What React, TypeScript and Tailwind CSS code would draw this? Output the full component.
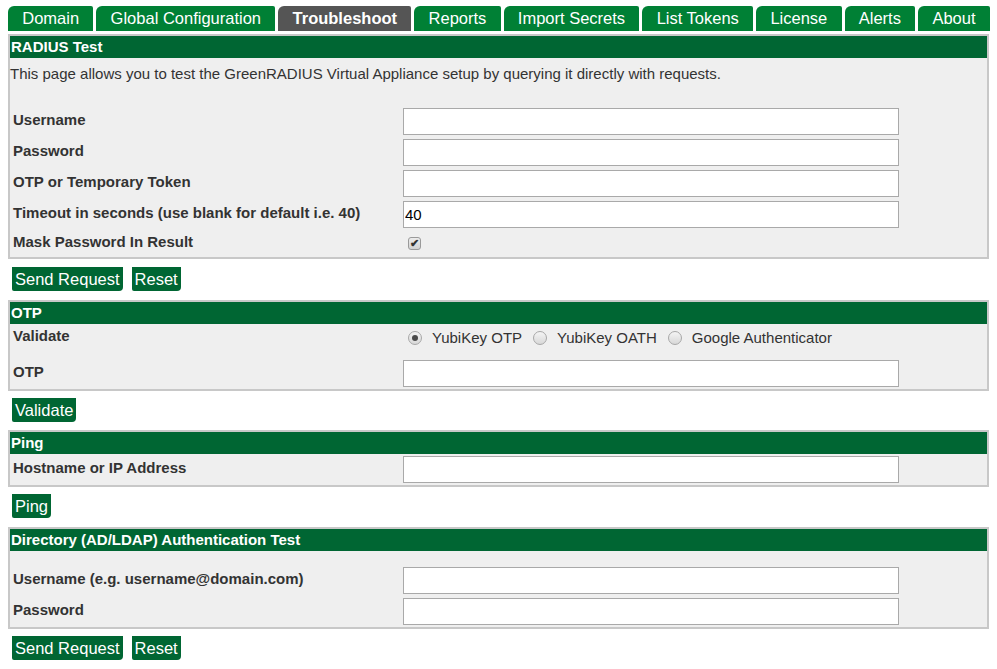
import React from "react";

const tabs = [
  "Domain",
  "Global Configuration",
  "Troubleshoot",
  "Reports",
  "Import Secrets",
  "List Tokens",
  "License",
  "Alerts",
  "About",
];

function Tabs() {
  return (
    <nav className="flex gap-[3px] whitespace-nowrap pt-[6px]">
      {tabs.map((t) =>
        t === "Troubleshoot" ? (
          <div
            key={t}
            className="h-[25px] shrink-0 rounded-tl-[6px] rounded-tr-[2px] bg-[#555555] px-[14.25px] text-[16.5px] font-bold leading-[25px] text-white"
          >
            {t}
          </div>
        ) : (
          <div
            key={t}
            className="h-[25px] shrink-0 rounded-tl-[6px] rounded-tr-[2px] bg-[#008035] px-[14.25px] text-[16.5px] leading-[25px] text-white"
          >
            {t}
          </div>
        )
      )}
    </nav>
  );
}

function Section({ title, children }: { title: string; children: React.ReactNode }) {
  return (
    <section className="border-2 border-[#c8c8c8] bg-[#efefef]">
      <h2 className="h-[22px] bg-[#006633] pl-[1px] text-[15px] font-bold leading-[22px] text-white">
        {title}
      </h2>
      {children}
    </section>
  );
}

function Row({ label, value, type = "text" }: { label: string; value?: string; type?: string }) {
  return (
    <div className="flex h-[31px] items-center">
      <label className="w-[393px] pb-[5px] pl-[3px] text-[15px] font-bold leading-[17px] text-[#333]">
        {label}
      </label>
      <input
        type={type}
        defaultValue={value}
        className="h-[27px] w-[496px] border border-[#a9a9a9] bg-white px-[1px] text-[15px] text-black outline-none"
      />
    </div>
  );
}

function Radio({ checked, label }: { checked?: boolean; label: string }) {
  return (
    <span className="flex items-center">
      <span className="flex h-[14px] w-[14px] items-center justify-center rounded-full border border-[#a8a8a8] bg-gradient-to-b from-[#f4f4f4] to-[#d8d8d8]">
        {checked && <span className="h-[6px] w-[6px] rounded-full bg-[#4a4a4a]" />}
      </span>
      <span className="ml-[10px] text-[15px] leading-[16px] text-[#333]">{label}</span>
    </span>
  );
}

function Btn({ children }: { children: React.ReactNode }) {
  return (
    <button className="block h-[24px] rounded-bl-[2px] rounded-br-[4px] bg-[#006633] px-[3px] text-[16.5px] leading-[24px] text-white">
      {children}
    </button>
  );
}

export default function App() {
  return (
    <div className="min-h-[669px] bg-white px-[8px] font-['Liberation_Sans',Arial,sans-serif]">
      <Tabs />

      <div className="mt-[3px]">
        <Section title="RADIUS Test">
          <div className="h-[48px] pt-[7px]">
            <p className="text-[15px] leading-[17px] text-[#333]">
              This page allows you to test the GreenRADIUS Virtual Appliance setup by querying it directly with requests.
            </p>
          </div>
          <Row label="Username" />
          <Row label="Password" type="password" />
          <Row label="OTP or Temporary Token" />
          <Row label="Timeout in seconds (use blank for default i.e. 40)" value="40" />
          <div className="flex h-[27px] items-center">
            <label className="w-[393px] pb-[4px] pl-[3px] text-[15px] font-bold leading-[17px] text-[#333]">
              Mask Password In Result
            </label>
            <span className="ml-[5px] flex h-[13px] w-[13px] items-center justify-center rounded-[3px] border border-[#9a9a9a] bg-gradient-to-b from-[#ececec] to-[#d2d2d2] text-[11px] font-bold leading-none text-[#333]">
              ✔
            </span>
          </div>
        </Section>
      </div>

      <div className="mt-[8px] flex gap-[9px] pl-[4px]">
        <Btn>Send Request</Btn>
        <Btn>Reset</Btn>
      </div>

      <div className="mt-[9px]">
        <Section title="OTP">
          <div className="flex h-[34px] items-start">
            <label className="w-[393px] pl-[3px] pt-[4px] text-[15px] font-bold leading-[16px] text-[#333]">
              Validate
            </label>
            <div className="ml-[5px] flex gap-[11px] pt-[6px]">
              <Radio checked label="YubiKey OTP" />
              <Radio label="YubiKey OATH" />
              <Radio label="Google Authenticator" />
            </div>
          </div>
          <Row label="OTP" />
        </Section>
      </div>

      <div className="mt-[7px] flex pl-[4px]">
        <Btn>Validate</Btn>
      </div>

      <div className="mt-[8px]">
        <Section title="Ping">
          <Row label="Hostname or IP Address" />
        </Section>
      </div>

      <div className="mt-[7px] flex pl-[4px]">
        <Btn>Ping</Btn>
      </div>

      <div className="mt-[9px]">
        <Section title="Directory (AD/LDAP) Authentication Test">
          <div className="h-[14px]" />
          <Row label="Username (e.g. username@domain.com)" />
          <Row label="Password" type="password" />
        </Section>
      </div>

      <div className="mt-[7px] flex gap-[9px] pl-[4px]">
        <Btn>Send Request</Btn>
        <Btn>Reset</Btn>
      </div>
    </div>
  );
}
